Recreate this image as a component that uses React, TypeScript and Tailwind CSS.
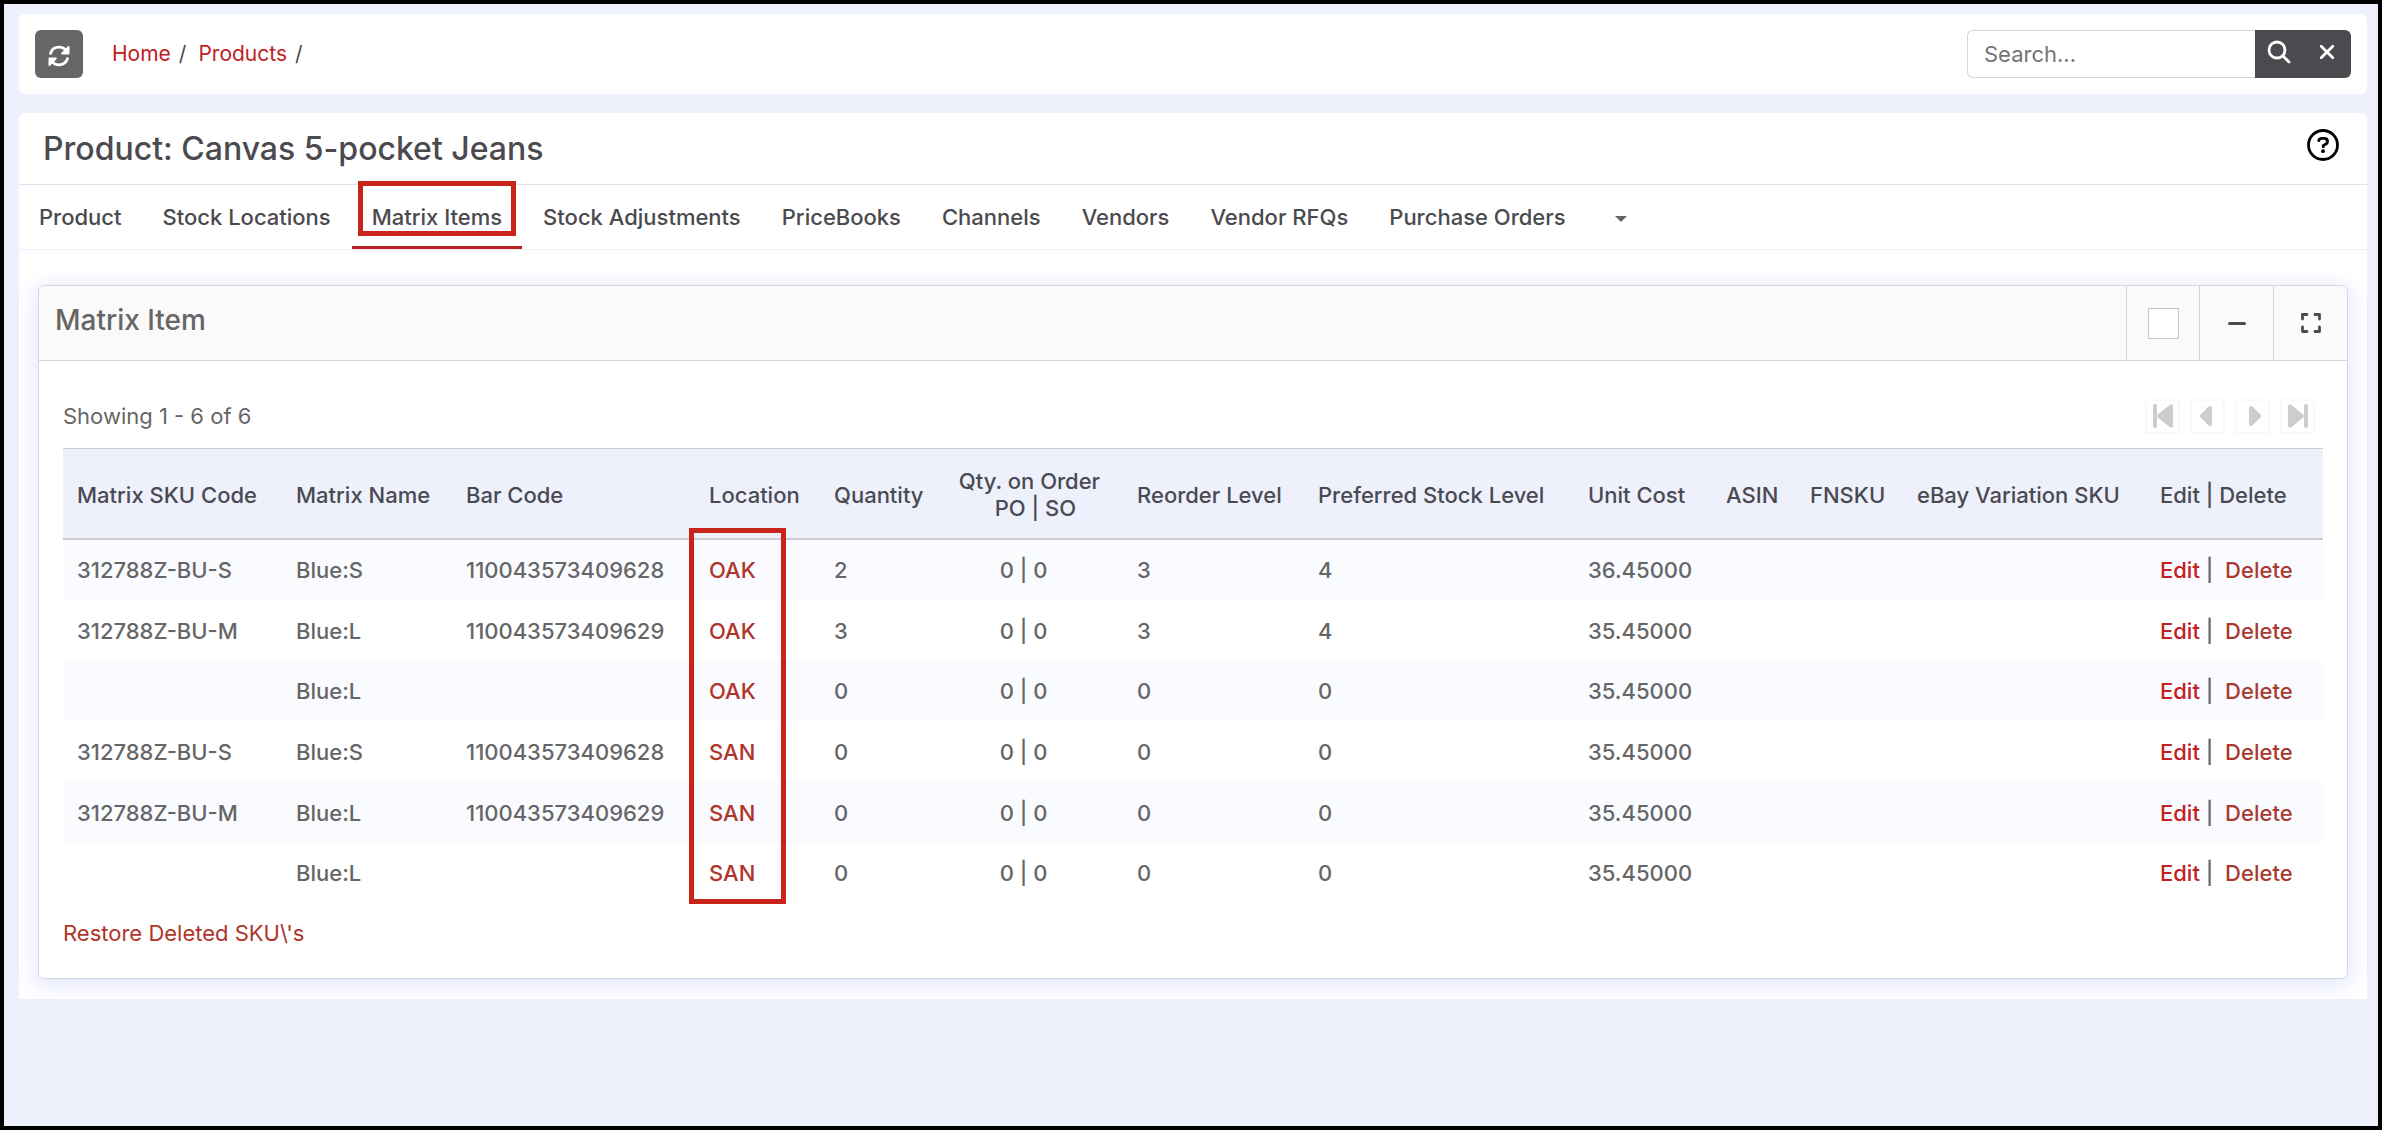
import { useState } from 'react';

type Item = {
  sku: string,
  name: string,
  barCode: string,
  location: string,
  quantity: number,
  reorder: number,
  preferred: number,
  cost: string
}

const tabs: string[] = [
  'Product',
  'Stock Locations',
  'Matrix Items',
  'Stock Adjustments',
  'PriceBooks',
  'Channels',
  'Vendors',
  'Vendor RFQs',
  'Purchase Orders',
]

const items: Item[] = [
  { sku: '312788Z-BU-S', name: 'Blue:S', barCode: '110043573409628', location: 'OAK', quantity: 2, reorder: 3, preferred: 4, cost: '36.45000' },
  { sku: '312788Z-BU-M', name: 'Blue:L', barCode: '110043573409629', location: 'OAK', quantity: 3, reorder: 3, preferred: 4, cost: '35.45000' },
  { sku: '', name: 'Blue:L', barCode: '', location: 'OAK', quantity: 0, reorder: 0, preferred: 0, cost: '35.45000' },
  { sku: '312788Z-BU-S', name: 'Blue:S', barCode: '110043573409628', location: 'SAN', quantity: 0, reorder: 0, preferred: 0, cost: '35.45000' },
  { sku: '312788Z-BU-M', name: 'Blue:L', barCode: '110043573409629', location: 'SAN', quantity: 0, reorder: 0, preferred: 0, cost: '35.45000' },
  { sku: '', name: 'Blue:L', barCode: '', location: 'SAN', quantity: 0, reorder: 0, preferred: 0, cost: '35.45000' },
]

const RefreshIcon = () => (
  <svg width="22" height="22" viewBox="0 0 22 22" fill="none" stroke="currentColor" strokeWidth="2.800" strokeLinecap="round" aria-hidden="true">
    <path d="M2.500 8.500C3.600 4.800 7 2.200 11 2.200c3 0 5.600 1.400 7.200 3.600" />
    <path d="M19.500 13.500c-1.100 3.700-4.500 6.300-8.500 6.300-3 0-5.600-1.400-7.200-3.600" />
    <path d="M20.600 2v6.500h-6.500z" fill="currentColor" strokeWidth="1.800" strokeLinejoin="round" />
    <path d="M1.400 20v-6.500h6.500z" fill="currentColor" strokeWidth="1.800" strokeLinejoin="round" />
  </svg>
)

const SearchIcon = () => (
  <svg width="24" height="24" viewBox="0 0 24 24" fill="none" stroke="currentColor" strokeWidth="2.800" strokeLinecap="round" aria-hidden="true">
    <circle cx="10" cy="10" r="8" />
    <path d="M16 16l6 6" />
  </svg>
)

const CloseIcon = () => (
  <svg width="16" height="16" viewBox="0 0 16 16" fill="none" stroke="currentColor" strokeWidth="2.800" strokeLinecap="round" aria-hidden="true">
    <path d="M2.200 2.200l11.600 11.600M13.800 2.200L2.200 13.800" />
  </svg>
)

const HelpIcon = () => (
  <svg width="32" height="32" viewBox="0 0 32 32" fill="none" stroke="currentColor" aria-hidden="true">
    <circle cx="16" cy="16" r="14.500" strokeWidth="2.800" />
    <path d="M11.800 11.500c.4-1.400 1.600-2.100 3.200-2.100h2c2 0 3.500 1.200 3.500 3 0 1.300-.7 2.200-1.900 2.900L16.300 16.500v1.300" strokeWidth="2.900" strokeLinecap="round" strokeLinejoin="round" />
    <circle cx="16" cy="22.200" r="1.900" fill="currentColor" stroke="none" />
  </svg>
)

const ExpandIcon = () => (
  <svg width="20" height="20" viewBox="0 0 20 20" fill="none" stroke="currentColor" strokeWidth="2.800" strokeLinecap="round" strokeLinejoin="round" aria-hidden="true">
    <path d="M1.500 6V1.500H6M14 1.500h4.500V6M18.500 14v4.500H14M6 18.500H1.500V14" />
  </svg>
)

const StepIcon = ({ last = false }: { last?: boolean }) => (
  <svg className={last ? 'rotate-180' : ''} width="20" height="24" viewBox="0 0 20 24" fill="currentColor" aria-hidden="true">
    <rect width="4" height="24" rx="2" />
    <path d="M4.800 10.600L16.500 .9C18 -.3 20 .5 20 2.500v19c0 2-2 2.800-3.500 1.600L4.800 13.400c-.9-.8-.9-2 0-2.800z" />
  </svg>
)

const ArrowIcon = ({ next = false }: { next?: boolean }) => (
  <svg className={next ? 'rotate-180' : ''} width="12" height="20" viewBox="0 0 12 20" fill="currentColor" aria-hidden="true">
    <path d="M.6 8.600L8.600 .6C10 -.6 12 .3 12 2v16c0 1.700-2 2.600-3.400 1.400L.6 11.400c-.8-.8-.8-2 0-2.800z" />
  </svg>
)

const pagerButtons: { label: string, icon: React.ReactNode, align: string }[] = [
  { label: 'First page', icon: <StepIcon />, align: 'justify-center' },
  { label: 'Previous page', icon: <ArrowIcon />, align: 'justify-center pr-1' },
  { label: 'Next page', icon: <ArrowIcon next />, align: 'justify-center pl-1' },
  { label: 'Last page', icon: <StepIcon last />, align: 'justify-center' },
]

const TopBar = () => {
  const [query, setQuery] = useState('')
  return (
    <header className="flex h-20 items-center justify-between rounded-md bg-white px-4">
      <div className="flex items-center">
        <button type="button" aria-label="Refresh" className="flex size-12 items-center justify-center rounded-md bg-[#666666] pt-1 text-white">
          <RefreshIcon />
        </button>
        <nav aria-label="Breadcrumb" className="ml-[29px] flex gap-2 text-[21px]">
          <a href="#" className="text-[#c0201f]">Home</a>
          <span>/</span>
          <a href="#" className="ml-1 text-[#c0201f]">Products</a>
          <span>/</span>
        </nav>
      </div>
      <form className="flex h-12" onSubmit={(e) => e.preventDefault()}>
        <input
          type="text"
          aria-label="Search"
          placeholder="Search..."
          value={query}
          onChange={(e) => setQuery(e.target.value)}
          className="w-72 rounded-l-md border border-r-0 border-[#d4d5d9] px-4 text-[22px] placeholder:text-[#757575]"
        />
        <button type="submit" aria-label="Search" className="flex w-12 items-center justify-center bg-[#4a4a4f] pb-1 text-white">
          <SearchIcon />
        </button>
        <button type="button" aria-label="Clear" onClick={() => setQuery('')} className="flex w-12 items-center justify-center rounded-r-md bg-[#4a4a4f] pb-1 text-white">
          <CloseIcon />
        </button>
      </form>
    </header>
  )
}

const TabBar = () => (
  <nav aria-label="Product sections" className="flex h-[65px] gap-px border-b border-[#eeeff3] text-[22px] font-medium">
    {
      tabs.map((name) => (
        <a key={name} href="#" className={name === 'Matrix Items' ? 'relative flex items-center border-b-3 border-[#b92025] px-5 pt-[3px]' : 'flex items-center px-5'}>
          {name}
          {name === 'Matrix Items' && <span className="absolute inset-x-[6px] -top-1 h-[55px] border-5 border-[#c9241b]" />}
        </a>
      ))
    }
    <button type="button" aria-label="More sections" className="ml-5 flex items-center px-2 pt-1">
      <span className="border-x-6 border-t-6 border-x-transparent border-t-[#666666]" />
    </button>
  </nav>
)

const MatrixTable = () => (
  <table className="w-full table-fixed border-t border-[#cbccd2] text-left text-[22px] font-medium">
    <colgroup>
      <col className="w-[219px]" />
      <col className="w-[170px]" />
      <col className="w-[243px]" />
      <col className="w-[125px]" />
      <col className="w-[116px]" />
      <col className="w-[187px]" />
      <col className="w-[181px]" />
      <col className="w-[270px]" />
      <col className="w-[138px]" />
      <col className="w-[84px]" />
      <col className="w-[107px]" />
      <col className="w-[243px]" />
      <col className="w-[177px]" />
    </colgroup>
    <thead>
      <tr className="h-[90px] border-b-2 border-[#cbccd2] bg-[#eef0fc] leading-[27px] whitespace-nowrap text-[#4a4a52] *:px-[14px] *:pt-1 *:font-medium">
        <th>Matrix SKU Code</th>
        <th>Matrix Name</th>
        <th>Bar Code</th>
        <th className="relative">
          Location
          <span className="absolute top-[79px] -left-[6px] h-[376px] w-[97px] border-5 border-[#c9241b]" />
        </th>
        <th>Quantity</th>
        <th className="text-center">Qty. on Order<br />&nbsp;&nbsp;PO | SO</th>
        <th>Reorder Level</th>
        <th>Preferred Stock Level</th>
        <th>Unit Cost</th>
        <th>ASIN</th>
        <th>FNSKU</th>
        <th>eBay Variation SKU</th>
        <th>Edit | Delete</th>
      </tr>
    </thead>
    <tbody className="text-[#666666]">
      {
        items.map((item, index: number) => (
          <tr key={index} className="h-[61px] whitespace-nowrap odd:bg-[#fafbff] nth-[3n]:h-[60px] *:px-[14px] *:pt-0.5">
            <td>{item.sku}</td>
            <td>{item.name}</td>
            <td>{item.barCode}</td>
            <td><a href="#" className="text-[#b0352a]">{item.location}</a></td>
            <td>{item.quantity}</td>
            <td className="text-center">0 | 0&nbsp;&nbsp;</td>
            <td>{item.reorder}</td>
            <td>{item.preferred}</td>
            <td>{item.cost}</td>
            <td></td>
            <td></td>
            <td></td>
            <td><a href="#" className="text-[#c4201f]">Edit</a> | &nbsp;<a href="#" className="text-[#a93a2f]">Delete</a></td>
          </tr>
        ))
      }
    </tbody>
  </table>
)

const MatrixPanel = () => (
  <section className="mx-[19px] mt-[35px] rounded-md border border-[#d4d6e0] bg-white shadow-[0_4px_20px_4px_#e6e9fb]">
    <div className="flex h-[75px] rounded-t-md border-b border-[#d4d5d9] bg-[#fafafa]">
      <h2 className="flex flex-1 items-center px-4 pb-1.5 text-[28px] font-medium text-[#666666]">Matrix Item</h2>
      <label className="flex w-[73px] items-center justify-center border-l border-[#d4d5d9]">
        <input type="checkbox" aria-label="Select panel" className="size-[31px] appearance-none border border-[#c4c5c9] bg-white" />
      </label>
      <button type="button" aria-label="Collapse" className="flex w-[74px] items-center justify-center border-l border-[#d4d5d9]">
        <span className="h-[3px] w-[18px] rounded-full bg-[#4a4a4f]" />
      </button>
      <button type="button" aria-label="Full screen" className="flex w-[74px] items-center justify-center border-l border-[#d4d5d9]">
        <ExpandIcon />
      </button>
    </div>
    <div className="px-6 pt-[37px] pb-7">
      <div className="mb-[14px] flex h-9 items-center justify-between text-[22px] text-[#666666]">
        <p>Showing 1 - 6 of 6</p>
        <div className="mr-2 flex gap-[10px] text-[#cccccc]">
          {
            pagerButtons.map(({ label, icon, align }) => (
              <button key={label} type="button" aria-label={label} className={`flex size-[35px] items-center border-2 border-[#f8f9ff] ${align}`}>
                {icon}
              </button>
            ))
          }
        </div>
      </div>
      <MatrixTable />
      <a href="#" className="mt-[14px] inline-block text-[22px] text-[#b0352a]">Restore Deleted SKU\'s</a>
    </div>
  </section>
)

const App = () => {
  return (
    <div className="min-h-screen border-4 border-black bg-[#eef0fc] pt-[10px] pr-[11px] pl-[15px] font-['Inter',sans-serif] text-[#4a4a4f]">
      <TopBar />
      <main className="mt-[19px] rounded-t-md bg-white pb-5">
        <div className="flex h-[72px] items-center justify-between border-b border-[#e0e1e5] pr-7 pl-6">
          <h1 className="text-[32px] font-medium">Product: Canvas 5-pocket Jeans</h1>
          <button type="button" aria-label="Help" className="pb-2 text-black">
            <HelpIcon />
          </button>
        </div>
        <TabBar />
        <MatrixPanel />
      </main>
    </div>
  );
};

export default App;
